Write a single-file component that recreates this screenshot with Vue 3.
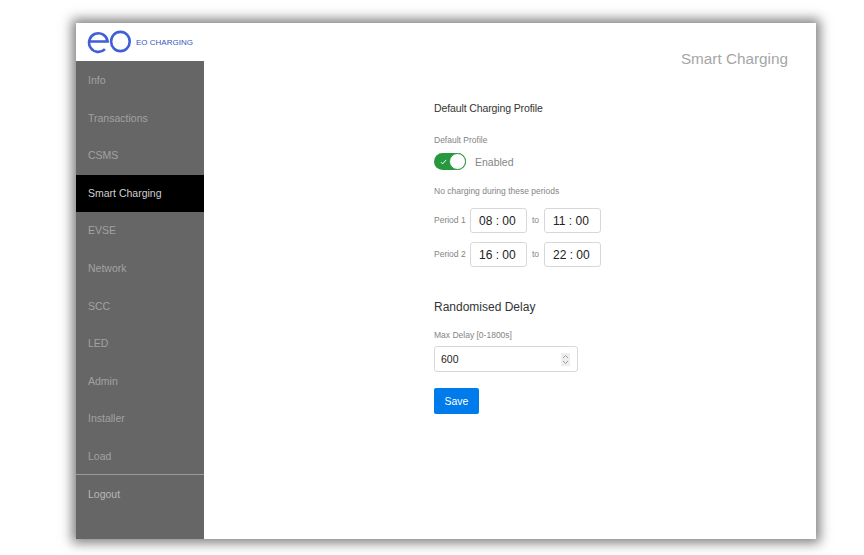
<script setup>
import { ref } from 'vue';

const activeItem = ref('Smart Charging');

const menuItems = ['Info', 'Transactions', 'CSMS', 'Smart Charging', 'EVSE', 'Network', 'SCC', 'LED', 'Admin', 'Installer', 'Load'];

const periods = ref([
  { label: 'Period 1', from: '08 : 00', to: '11 : 00' },
  { label: 'Period 2', from: '16 : 00', to: '22 : 00' }
]);
</script>

<template>
  <div class="page">
    <div class="window">
      <aside class="sidebar">
        <div class="brand">
          <svg class="brand-logo" width="44" height="24" viewBox="0 0 44 24" fill="none" stroke="#3f5fd8" stroke-width="2.6">
            <path d="M2 11.5h18.6a9.3 9.3 0 1 0-2.6 7.6"></path>
            <ellipse cx="33.4" cy="11.5" rx="9.3" ry="9.6"></ellipse>
          </svg>
          <span class="brand-name">EO CHARGING</span>
        </div>
        <nav class="menu">
          <a
            v-for="item in menuItems"
            :key="item"
            class="menu-item"
            :class="{ active: activeItem === item }"
          >{{ item }}</a>
          <div class="menu-divider"></div>
          <a class="menu-item">Logout</a>
        </nav>
      </aside>

      <main class="content">
        <h1 class="page-title">Smart Charging</h1>

        <form class="form">
          <h2 class="section-title">Default Charging Profile</h2>
          <div class="small-label">Default Profile</div>
          <div class="toggle-row">
            <span class="toggle">
              <svg width="7" height="6" viewBox="0 0 9 8" fill="none" stroke="#fff" stroke-width="1.3">
                <path d="M1 4.2l2.3 2.3L8 1.2"></path>
              </svg>
              <span class="knob"></span>
            </span>
            <span class="toggle-text">Enabled</span>
          </div>
          <div class="small-label note">No charging during these periods</div>
          <div v-for="period in periods" :key="period.label" class="period-row">
            <span class="small-label period-label">{{ period.label }}</span>
            <span class="time-box">{{ period.from }}</span>
            <span class="small-label to">to</span>
            <span class="time-box">{{ period.to }}</span>
          </div>

          <h2 class="section-title delay-title">Randomised Delay</h2>
          <div class="small-label delay-label">Max Delay [0-1800s]</div>
          <div class="number-box">
            <span>600</span>
            <span class="spinner">
              <svg width="7" height="11" viewBox="0 0 7 11" fill="none" stroke="#888" stroke-width="0.8">
                <path d="M1 4l2.5-2.5L6 4M1 7l2.5 2.5L6 7"></path>
              </svg>
            </span>
          </div>
          <button type="button" class="save">Save</button>
        </form>
      </main>
    </div>
  </div>
</template>

<style>
html, body {
  margin: 0;
  background: #fff;
}
</style>

<style scoped>
.page {
  width: 864px;
  height: 555px;
  box-sizing: border-box;
  padding: 23px 48px 16px 76px;
  font-family: "Liberation Sans", Arial, sans-serif;
  overflow: hidden;
}

.window {
  display: flex;
  height: 100%;
  background: #fff;
  box-shadow: 0 0 11px 4px rgba(0, 0, 0, 0.5);
}

.sidebar {
  width: 128px;
  flex-shrink: 0;
  display: flex;
  flex-direction: column;
  background: #666;
}

.brand {
  height: 38px;
  flex-shrink: 0;
  display: flex;
  align-items: center;
  gap: 5px;
  padding-left: 11px;
  background: #fff;
}

.brand-name {
  font-size: 8px;
  color: #3557c0;
  white-space: nowrap;
}

.menu {
  display: flex;
  flex-direction: column;
  padding-top: 0.8px;
}

.menu-item {
  box-sizing: border-box;
  height: 37.6px;
  display: flex;
  align-items: center;
  padding: 0 0 1px 12px;
  font-size: 10.5px;
  color: #a2a2a2;
}

.menu-item.active {
  background: #000;
  color: #d0d0d0;
}

.menu-item:last-child {
  color: #b8b8b8;
}

.menu-divider {
  height: 1px;
  margin-top: -1px;
  background: #999;
}

.content {
  flex: 1;
  min-width: 0;
}

.page-title {
  margin: 27px 28px 0 0;
  text-align: right;
  font-size: 15.3px;
  line-height: 18px;
  font-weight: 400;
  color: #a6a6a6;
}

.form {
  margin: 33px 0 0 230px;
}

.section-title {
  margin: 0;
  font-size: 10.5px;
  line-height: 14px;
  font-weight: 400;
  letter-spacing: -0.12px;
  color: #333;
}

.small-label {
  margin-top: 20px;
  font-size: 8.5px;
  line-height: 11px;
  color: #858585;
}

.toggle-row {
  display: flex;
  align-items: center;
  gap: 9px;
  margin-top: 7px;
}

.toggle {
  position: relative;
  box-sizing: border-box;
  width: 32px;
  height: 17px;
  display: flex;
  align-items: center;
  padding-left: 6px;
  border-radius: 9px;
  background: #28983f;
}

.knob {
  position: absolute;
  right: 0;
  top: 0;
  box-sizing: border-box;
  width: 17px;
  height: 17px;
  border-radius: 50%;
  background: #fff;
  border: 1px solid #28983f;
}

.toggle-text {
  font-size: 10.5px;
  color: #858585;
}

.note {
  margin-top: 16px;
  margin-bottom: 11px;
}

.period-row {
  display: flex;
  align-items: center;
  height: 25px;
  margin-bottom: 9px;
}

.period-row .small-label {
  margin-top: 0;
}

.period-label {
  width: 36px;
}

.time-box {
  box-sizing: border-box;
  width: 57px;
  height: 25px;
  display: flex;
  align-items: center;
  padding-left: 8px;
  border: 1px solid #d8d8d8;
  border-radius: 3px;
  font-size: 12px;
  color: #222;
}

.to {
  width: 17px;
  text-align: center;
}

.delay-title {
  margin-top: 33px;
  font-size: 12px;
  letter-spacing: 0;
}

.delay-label {
  margin-top: 16px;
}

.number-box {
  box-sizing: border-box;
  width: 144px;
  height: 26px;
  margin-top: 5px;
  display: flex;
  align-items: center;
  justify-content: space-between;
  padding: 0 7px 0 6px;
  border: 1px solid #d8d8d8;
  border-radius: 3px;
  font-size: 10.5px;
  color: #222;
}

.spinner {
  width: 9px;
  height: 13px;
  display: flex;
  align-items: center;
  justify-content: center;
  background: #eee;
}

.save {
  display: block;
  width: 45px;
  height: 26px;
  margin-top: 16px;
  padding: 0;
  border: none;
  border-radius: 2px;
  background: #007bec;
  color: #fff;
  font-family: inherit;
  font-size: 10.5px;
}
</style>
